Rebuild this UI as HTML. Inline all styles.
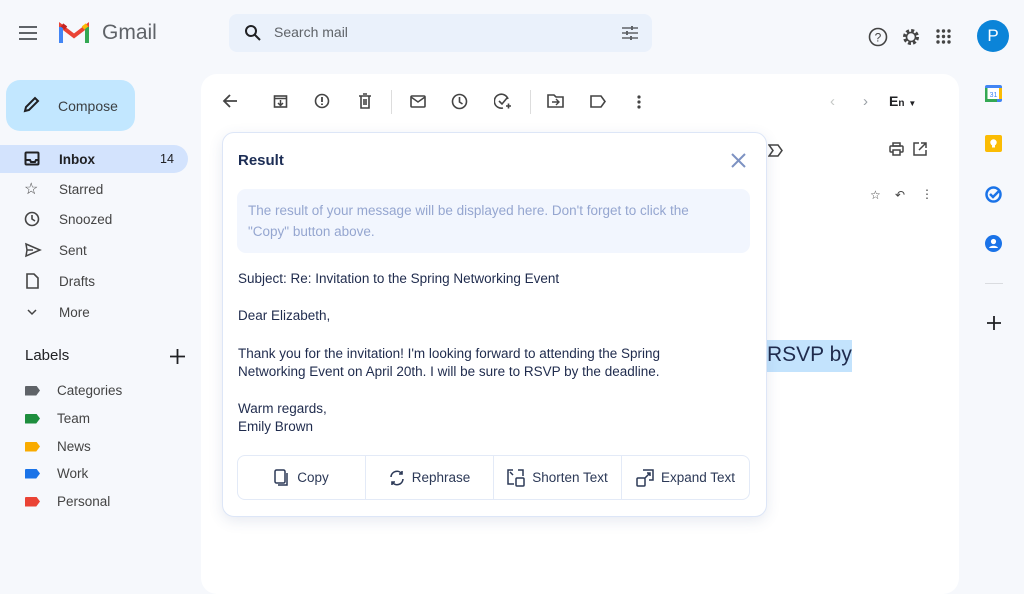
<!DOCTYPE html>
<html><head><meta charset="utf-8"><style>
*{box-sizing:border-box;margin:0;padding:0}
body{width:1024px;height:575px;overflow:hidden;background:#f6f8fc;font-family:"Liberation Sans",sans-serif;position:relative;color:#202124}
.a{position:absolute}
svg{display:block}
.nav{position:absolute;left:0;width:188px;height:28px;display:flex;align-items:center;font-size:13.5px;color:#444}
.nav .ic{width:18px;margin-left:24px;margin-right:17px}
.lab{position:absolute;left:25px;font-size:13.5px;color:#444;display:flex;align-items:center}
.tag{width:15px;height:10px;margin-right:17px;clip-path:polygon(0 0,75% 0,100% 50%,75% 100%,0 100%);border-radius:1px}
.p{font-size:13.5px;color:#1f2b4d;line-height:18px;position:absolute;left:238px}
.btn{flex:1;display:flex;align-items:center;justify-content:center;font-size:13.5px;color:#2c3957;border-right:1px solid #e3eaf7;gap:7px}
.btn:last-child{border-right:none}
</style></head><body>
<!-- header -->
<svg class="a" style="left:18px;top:25px" width="20" height="16"><path d="M1 2h18M1 8h18M1 14h18" stroke="#5f6368" stroke-width="2"/></svg>
<svg class="a" style="left:59px;top:21px" width="31" height="23" viewBox="0 0 31 23"><path d="M2 22V5l13 10L28 5v17" fill="none" stroke="#ea4335" stroke-width="4"/><path d="M2 22V6" stroke="#4285f4" stroke-width="4"/><path d="M28 22V6" stroke="#34a853" stroke-width="4"/><path d="M28 4l-4 3" stroke="#fbbc04" stroke-width="4"/><path d="M3 4l4 3" stroke="#c5221f" stroke-width="4"/></svg>
<div class="a" style="left:102px;top:21px;font-size:21px;color:#5f6368">Gmail</div>
<div class="a" style="left:229px;top:14px;width:423px;height:38px;background:#eaf1fb;border-radius:8px"></div>
<svg class="a" style="left:244px;top:24px" width="18" height="18"><circle cx="7" cy="7" r="5" fill="none" stroke="#202124" stroke-width="2"/><path d="M11 11l5 5" stroke="#202124" stroke-width="2"/></svg>
<div class="a" style="left:274px;top:24px;font-size:14px;color:#5f6368">Search mail</div>
<svg class="a" style="left:621px;top:25px" width="18" height="16"><path d="M1 3h16M1 8h16M1 13h16" stroke="#5f6368" stroke-width="1.5"/><path d="M11 1v4M6 6v4M10 11v4" stroke="#5f6368" stroke-width="2"/></svg>
<svg class="a" style="left:868px;top:27px" width="20" height="20"><circle cx="10" cy="10" r="8.5" fill="none" stroke="#444" stroke-width="1.6"/><text x="10" y="14.5" font-size="12" text-anchor="middle" fill="#444" font-family="Liberation Sans">?</text></svg>
<svg class="a" style="left:901px;top:27px" width="20" height="20"><circle cx="10" cy="10" r="6.5" fill="none" stroke="#444" stroke-width="3" stroke-dasharray="3 2.1"/><circle cx="10" cy="10" r="4.5" fill="none" stroke="#444" stroke-width="1.6"/></svg>
<svg class="a" style="left:936px;top:29px" width="15" height="15"><g fill="#444"><circle cx="2" cy="2" r="1.7"/><circle cx="7.5" cy="2" r="1.7"/><circle cx="13" cy="2" r="1.7"/><circle cx="2" cy="7.5" r="1.7"/><circle cx="7.5" cy="7.5" r="1.7"/><circle cx="13" cy="7.5" r="1.7"/><circle cx="2" cy="13" r="1.7"/><circle cx="7.5" cy="13" r="1.7"/><circle cx="13" cy="13" r="1.7"/></g></svg>
<div class="a" style="left:977px;top:20px;width:32px;height:32px;border-radius:50%;background:#0b84d8;color:#fff;font-size:17px;text-align:center;line-height:32px">P</div>
<!-- sidebar -->
<div class="a" style="left:6px;top:80px;width:129px;height:51px;background:#c2e7ff;border-radius:14px"></div>
<svg class="a" style="left:22px;top:96px" width="18" height="18"><path d="M3 15l1-4L13 2l3 3-9 9z" fill="none" stroke="#202124" stroke-width="2"/></svg>
<div class="a" style="left:58px;top:98px;font-size:14px;color:#3c4043">Compose</div>
<div class="a" style="left:0;top:145px;width:188px;height:28px;background:#d3e3fd;border-radius:0 14px 14px 0"></div>
<div class="nav" style="top:145px;font-weight:bold;color:#202124"><svg class="ic" width="18" height="16"><rect x="1.5" y="1.5" width="13" height="12" rx="1" fill="none" stroke="#202124" stroke-width="2"/><path d="M2 9h4l1 2h4l1-2h3" fill="none" stroke="#202124" stroke-width="2"/></svg>Inbox<span style="position:absolute;left:160px;font-weight:normal;font-size:12.5px">14</span></div>
<div class="nav" style="top:175px"><span class="ic" style="font-size:16px">☆</span>Starred</div>
<div class="nav" style="top:205px"><svg class="ic" width="18" height="16"><circle cx="8" cy="8" r="6.5" fill="none" stroke="#444" stroke-width="1.6"/><path d="M8 4v4l3 2" fill="none" stroke="#444" stroke-width="1.6"/></svg>Snoozed</div>
<div class="nav" style="top:236px"><svg class="ic" width="18" height="16"><path d="M2 2l14 6-14 6 1-6z M3 8h6" fill="none" stroke="#444" stroke-width="1.5"/></svg>Sent</div>
<div class="nav" style="top:267px"><svg class="ic" width="18" height="16"><path d="M3 1h7l4 4v10H3z" fill="none" stroke="#444" stroke-width="1.6"/></svg>Drafts</div>
<div class="nav" style="top:298px"><svg class="ic" width="18" height="16"><path d="M4 6l4 4 4-4" fill="none" stroke="#444" stroke-width="1.5"/></svg>More</div>
<div class="a" style="left:25px;top:347px;font-size:15px;color:#202124">Labels</div>
<svg class="a" style="left:170px;top:349px" width="15" height="15"><path d="M7.5 0v15M0 7.5h15" stroke="#202124" stroke-width="1.8"/></svg>
<div class="lab" style="top:383px"><span class="tag" style="background:#5f6368"></span>Categories</div>
<div class="lab" style="top:411px"><span class="tag" style="background:#1e8e3e"></span>Team</div>
<div class="lab" style="top:439px"><span class="tag" style="background:#f9ab00"></span>News</div>
<div class="lab" style="top:466px"><span class="tag" style="background:#1a73e8"></span>Work</div>
<div class="lab" style="top:494px"><span class="tag" style="background:#ea4335"></span>Personal</div>
<!-- main panel -->
<div class="a" style="left:201px;top:74px;width:758px;height:520px;background:#fff;border-radius:16px"></div>
<svg class="a" style="left:222px;top:93px" width="16" height="16"><path d="M15 8H2M8 2L2 8l6 6" fill="none" stroke="#444" stroke-width="1.8"/></svg>
<svg class="a" style="left:273px;top:94px" width="15" height="15"><rect x="1.5" y="2" width="12" height="11" fill="none" stroke="#444" stroke-width="1.6"/><path d="M1 4.5h13M7.5 6v5M5 9l2.5 2.5L10 9" fill="none" stroke="#444" stroke-width="1.5"/></svg>
<svg class="a" style="left:314px;top:93px" width="16" height="16"><circle cx="8" cy="8" r="6.5" fill="none" stroke="#444" stroke-width="1.6"/><path d="M8 4v5M8 10.5v1.5" stroke="#444" stroke-width="1.8"/></svg>
<svg class="a" style="left:358px;top:93px" width="14" height="16"><path d="M1 3h12M5 1h4M3 3v12h8V3M6 6v6M8 6v6" fill="none" stroke="#444" stroke-width="1.6"/></svg>
<div class="a" style="left:391px;top:90px;width:1px;height:24px;background:#ddd"></div>
<svg class="a" style="left:410px;top:95px" width="16" height="13"><rect x="1" y="1" width="14" height="11" rx="1" fill="none" stroke="#444" stroke-width="1.6"/><path d="M1 2l7 5 7-5" fill="none" stroke="#444" stroke-width="1.5"/></svg>
<svg class="a" style="left:451px;top:93px" width="17" height="17"><circle cx="8.5" cy="8.5" r="7" fill="none" stroke="#444" stroke-width="1.6"/><path d="M8.5 4v5l3 2" fill="none" stroke="#444" stroke-width="1.6"/></svg>
<svg class="a" style="left:494px;top:93px" width="18" height="17"><path d="M14 6A7 7 0 1 0 9 15" fill="none" stroke="#444" stroke-width="1.6"/><path d="M5 8l3 3 5-6M12 13h5M14.5 10.5v5" fill="none" stroke="#444" stroke-width="1.6"/></svg>
<div class="a" style="left:530px;top:90px;width:1px;height:24px;background:#ddd"></div>
<svg class="a" style="left:547px;top:94px" width="17" height="14"><path d="M1 1h6l2 2h7v10H1z" fill="none" stroke="#444" stroke-width="1.6"/><path d="M5 8h7M9 5l3 3-3 3" fill="none" stroke="#444" stroke-width="1.4"/></svg>
<svg class="a" style="left:590px;top:95px" width="16" height="13"><path d="M1 1h10l4 5.5-4 5.5H1z" fill="none" stroke="#444" stroke-width="1.6"/></svg>
<svg class="a" style="left:636px;top:94px" width="6" height="16"><g fill="#444"><circle cx="3" cy="3" r="1.6"/><circle cx="3" cy="8" r="1.6"/><circle cx="3" cy="13" r="1.6"/></g></svg>
<div class="a" style="left:830px;top:93px;color:#c4c7c5;font-size:15px">‹</div>
<div class="a" style="left:863px;top:93px;color:#9aa0a6;font-size:15px">›</div>
<div class="a" style="left:889px;top:93px;font-size:14px;font-weight:bold;color:#202124">E<span style="font-size:10px">n</span> <span style="font-size:8px">▼</span></div>
<svg class="a" style="left:768px;top:144px" width="16" height="13"><path d="M1 1h9l4 5.5-4 5.5H1l4-5.5z" fill="none" stroke="#444" stroke-width="1.5"/></svg>
<svg class="a" style="left:889px;top:142px" width="15" height="14"><rect x="4" y="1" width="7" height="3" fill="none" stroke="#444" stroke-width="1.5"/><rect x="1" y="4" width="13" height="6" rx="1" fill="none" stroke="#444" stroke-width="1.5"/><rect x="4" y="8" width="7" height="5" fill="#fff" stroke="#444" stroke-width="1.5"/></svg>
<svg class="a" style="left:913px;top:142px" width="14" height="14"><path d="M6 1H1v12h12V8M8 1h5v5M13 1L6 8" fill="none" stroke="#444" stroke-width="1.5"/></svg>
<div class="a" style="left:870px;top:188px;font-size:12px;color:#444">☆</div>
<div class="a" style="left:895px;top:188px;font-size:12px;color:#444">↶</div>
<div class="a" style="left:921px;top:187px;font-size:12px;color:#444">⋮</div>
<div class="a" style="left:766px;top:340px;width:86px;height:32px;background:#c3e3fd"></div>
<div class="a" style="left:767px;top:343px;font-size:21px;color:#1f2b4d">RSVP by</div>
<!-- right rail -->
<svg class="a" style="left:985px;top:85px" width="17" height="17"><rect x="0" y="0" width="17" height="17" rx="2" fill="#4285f4"/><rect x="2.5" y="3" width="12" height="11" fill="#fff"/><rect x="0" y="14" width="12" height="3" fill="#34a853"/><rect x="14" y="3" width="3" height="11" fill="#fbbc04"/><rect x="0" y="3" width="2.5" height="14" fill="#34a853"/><text x="8.5" y="12" font-size="7" text-anchor="middle" fill="#4285f4" font-family="Liberation Sans">31</text></svg>
<svg class="a" style="left:985px;top:135px" width="17" height="17"><rect width="17" height="17" rx="2" fill="#fbbc04"/><circle cx="8.5" cy="7.5" r="3.2" fill="#fff"/><rect x="7" y="10.5" width="3" height="2" fill="#fff"/></svg>
<svg class="a" style="left:985px;top:186px" width="17" height="17"><circle cx="8.5" cy="8.5" r="7" fill="none" stroke="#1a73e8" stroke-width="2.5"/><path d="M5 8l3 3 7-7" fill="none" stroke="#1a73e8" stroke-width="2.5"/></svg>
<svg class="a" style="left:985px;top:235px" width="17" height="17"><circle cx="8.5" cy="8.5" r="8.5" fill="#1a73e8"/><circle cx="8.5" cy="6.5" r="2.6" fill="#fff"/><path d="M4 13c1-3 8-3 9 0z" fill="#fff"/></svg>
<div class="a" style="left:985px;top:283px;width:18px;height:1px;background:#dadce0"></div>
<svg class="a" style="left:987px;top:316px" width="14" height="14"><path d="M7 0v14M0 7h14" stroke="#202124" stroke-width="1.8"/></svg>
<!-- popup -->
<div class="a" style="left:222px;top:132px;width:545px;height:385px;background:#fff;border:1px solid #dde6f7;border-radius:12px;box-shadow:0 4px 14px rgba(60,80,140,0.12)"></div>
<div class="a" style="left:238px;top:152px;font-size:15px;font-weight:bold;color:#1c2d55">Result</div>
<svg class="a" style="left:731px;top:153px" width="15" height="15"><path d="M1 1l13 13M14 1L1 14" stroke="#7d92c2" stroke-width="2"/></svg>
<div class="a" style="left:237px;top:189px;width:513px;height:64px;background:#f2f6fe;border-radius:9px;padding:11px 40px 11px 11px;font-size:13.5px;line-height:21px;color:#95a6d0">The result of your message will be displayed here. Don't forget to click the "Copy" button above.</div>
<div class="p" style="top:270px">Subject: Re: Invitation to the Spring Networking Event</div>
<div class="p" style="top:307px">Dear Elizabeth,</div>
<div class="p" style="top:345px">Thank you for the invitation! I'm looking forward to attending the Spring<br>Networking Event on April 20th. I will be sure to RSVP by the deadline.</div>
<div class="p" style="top:400px">Warm regards,<br>Emily Brown</div>
<div class="a" style="left:237px;top:455px;width:513px;height:45px;border:1px solid #e3eaf7;border-radius:8px;display:flex">
<div class="btn"><svg width="16" height="18"><rect x="1" y="1" width="10" height="13" rx="1.5" fill="none" stroke="#2c3957" stroke-width="1.5"/><path d="M13 4v12H4" fill="none" stroke="#2c3957" stroke-width="1.5"/></svg>Copy</div>
<div class="btn"><svg width="16" height="16"><path d="M2 7a6 6 0 0 1 11-3M14 9a6 6 0 0 1-11 3" fill="none" stroke="#2c3957" stroke-width="1.6"/><path d="M13 1v3h-3M3 15v-3h3" fill="none" stroke="#2c3957" stroke-width="1.6"/></svg>Rephrase</div>
<div class="btn"><svg width="18" height="18"><path d="M6 1H1v14h6M11 1h5v6" fill="none" stroke="#2c3957" stroke-width="1.5"/><rect x="9" y="9" width="8" height="8" rx="1" fill="none" stroke="#2c3957" stroke-width="1.5"/><path d="M3 3l3 3" stroke="#2c3957" stroke-width="1.5"/></svg>Shorten Text</div>
<div class="btn"><svg width="18" height="18"><path d="M7 1h10v10h-4" fill="none" stroke="#2c3957" stroke-width="1.5"/><rect x="1" y="9" width="8" height="8" rx="1" fill="none" stroke="#2c3957" stroke-width="1.5"/><path d="M9 9l5-5M11 4h3v3" fill="none" stroke="#2c3957" stroke-width="1.5"/></svg>Expand Text</div>
</div>
</body></html>
